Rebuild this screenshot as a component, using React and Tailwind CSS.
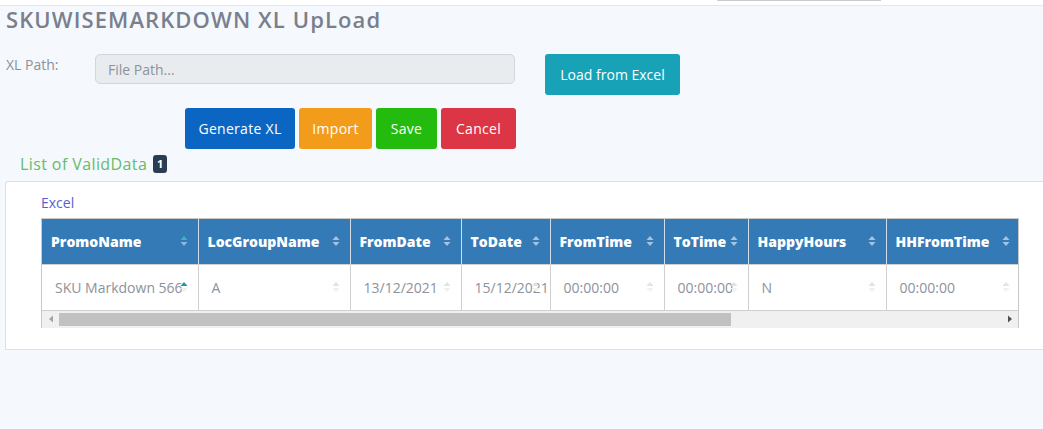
const columns = [
  { key: 'PromoName', w: 156, value: 'SKU Markdown 566', active: true },
  { key: 'LocGroupName', w: 152, value: 'A' },
  { key: 'FromDate', w: 111, value: '13/12/2021' },
  { key: 'ToDate', w: 89, value: '15/12/2021' },
  { key: 'FromTime', w: 114, value: '00:00:00' },
  { key: 'ToTime', w: 84, value: '00:00:00' },
  { key: 'HappyHours', w: 138, value: 'N' },
  { key: 'HHFromTime', w: 134, value: '00:00:00' },
]

const SortIcon = ({ up = '#9dbbdc', down = '#9dbbdc', className = '' }) => (
  <svg width="8" height="12" viewBox="0 0 8 12" className={`shrink-0 ${className}`}>
    <path d="M4 1 L7.5 5 L0.5 5 Z" fill={up} />
    <path d="M4 11 L7.5 7 L0.5 7 Z" fill={down} />
  </svg>
)

const App = () => {
  return (
    <div
      className="w-[1043px] h-[429px] overflow-hidden bg-[#f5f8fc] text-[#7b808d]"
      style={{ fontFamily: '"Open Sans", Inter, sans-serif' }}
    >
      {/* top strip */}
      <div className="relative h-[6px] bg-white border-b border-[#e4e8ee]">
        <div className="absolute left-[717px] top-0 w-[164px] h-[1px] bg-[#c9cbcf]" />
      </div>

      <h1 className="pl-[6px] text-[22px] leading-[26px] font-semibold text-[#7a7f8d] tracking-[1.1px]">
        SKUWISEMARKDOWN XL UpLoad
      </h1>

      {/* path row */}
      <div className="flex items-start mt-[22px]">
        <label className="w-[95px] pl-[6px] text-[14px] text-[#8b909c]">XL Path:</label>
        <div className="w-[420px] h-[30px] rounded-[5px] border border-[#d3d6da] bg-[#e9ecef] flex items-center pl-[12px] text-[14px] text-[#8d929c]">
          File Path...
        </div>
        <button className="ml-[30px] w-[135px] h-[41px] rounded-[3px] bg-[#17a2b8] text-white text-[14px]">
          Load from Excel
        </button>
      </div>

      {/* actions */}
      <div className="flex gap-[4px] pl-[185px] mt-[13px]">
        <button className="w-[110px] h-[41px] rounded-[3px] bg-[#0b66c3] text-white text-[14px] tracking-[0.3px]">Generate XL</button>
        <button className="w-[73px] h-[41px] rounded-[3px] bg-[#f39c1b] text-white text-[14px] tracking-[0.3px]">Import</button>
        <button className="w-[61px] h-[41px] rounded-[3px] bg-[#22bb0e] text-white text-[14px] tracking-[0.3px]">Save</button>
        <button className="w-[75px] h-[41px] rounded-[3px] bg-[#dc3545] text-white text-[14px] tracking-[0.3px]">Cancel</button>
      </div>

      <div className="flex items-center gap-[6px] pl-[20px] mt-[5px] h-[20px]">
        <span className="text-[16px] font-medium text-[#66bb6a] tracking-[0.4px]">List of ValidData</span>
        <span className="w-[14px] h-[18px] rounded-[3px] bg-[#2b3d51] text-white text-[11px] font-bold flex items-center justify-center">
          1
        </span>
      </div>

      {/* card */}
      <div className="ml-[5px] mt-[7px] h-[169px] bg-white border border-r-0 border-[#dcdfe4] rounded-tl-[4px] pl-[35px] pt-[10px]">
        <div className="text-[14px] text-[#5a5fcc] h-[26px]">Excel</div>
        <div className="w-[978px] overflow-hidden border border-[#c9c9c9] border-b-0">
          <table className="table-fixed border-collapse" style={{ width: columns.reduce((s, c) => s + c.w, 0) }}>
            <colgroup>
              {columns.map((c) => (
                <col key={c.key} style={{ width: c.w }} />
              ))}
            </colgroup>
            <thead>
              <tr className="h-[45px] bg-[#337ab7]">
                {columns.map((c) => (
                  <th
                    key={c.key}
                    className="border-r border-[#d5dde6] pl-[9px] pr-[10px] text-left text-[14px] font-extrabold text-white"
                  >
                    <div className="flex items-center justify-between">
                      <span className="whitespace-nowrap">{c.key}</span>
                      <SortIcon up={c.active ? '#3fb3c4' : '#a9c2de'} down={c.active ? '#8fb5e0' : '#a9c2de'} />
                    </div>
                  </th>
                ))}
              </tr>
            </thead>
            <tbody>
              <tr className="h-[46px]">
                {columns.map((c) => (
                  <td
                    key={c.key}
                    className="relative border-r border-t border-b border-[#cfcfcf] pl-[13px] text-[14px] text-[#8d929c] whitespace-nowrap"
                  >
                    {c.value}
                    <SortIcon
                      className="absolute right-[10px] top-[16px]"
                      up={c.active ? '#1b9aaa' : '#dfe2e6'}
                      down="#eef0f2"
                    />
                  </td>
                ))}
              </tr>
            </tbody>
          </table>
          {/* scrollbar */}
          <div className="flex items-center h-[17px] bg-[#f0f0f0]">
            <div className="w-[17px] h-full flex items-center justify-center">
              <svg width="6" height="8" viewBox="0 0 6 8">
                <path d="M1 4 L5 0.5 L5 7.5 Z" fill="#a3a3a3" />
              </svg>
            </div>
            <div className="w-[672px] h-[13px] bg-[#c1c1c1]" />
            <div className="flex-1" />
            <div className="w-[17px] h-full flex items-center justify-center">
              <svg width="6" height="8" viewBox="0 0 6 8">
                <path d="M5 4 L1 0.5 L1 7.5 Z" fill="#505050" />
              </svg>
            </div>
          </div>
        </div>
      </div>
    </div>
  )
}

export default App
